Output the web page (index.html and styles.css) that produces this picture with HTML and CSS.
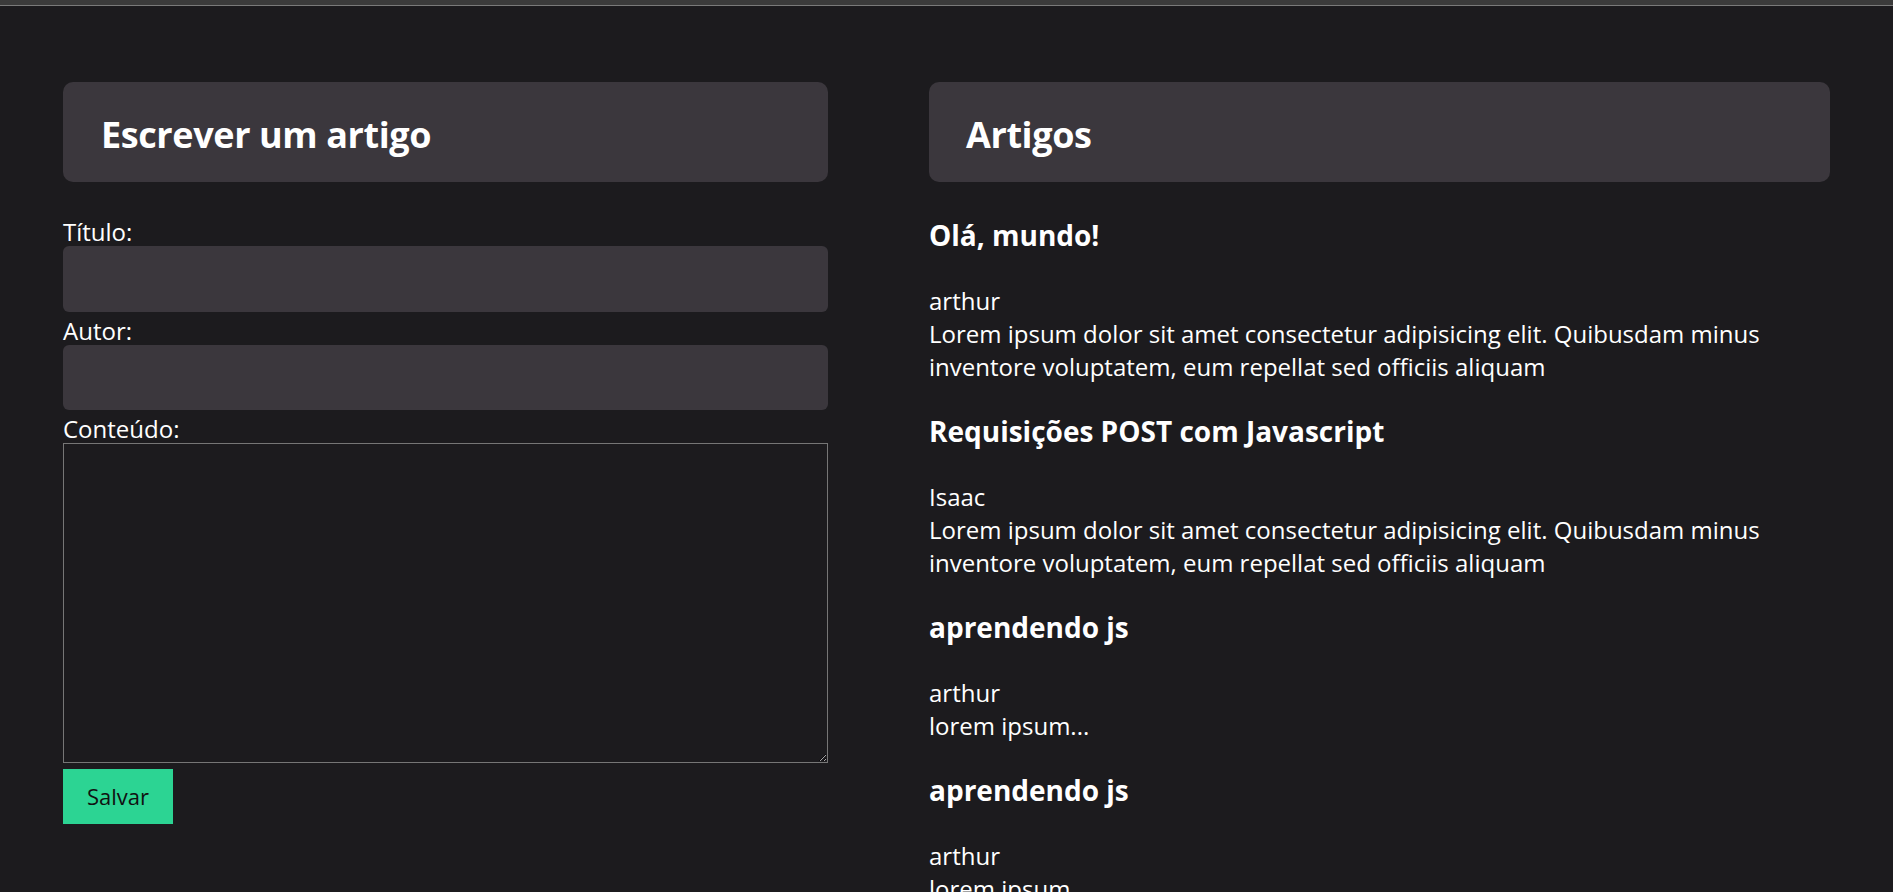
FILE: index.html
```html
<!DOCTYPE html>
<html lang="pt-BR">
<head>
<meta charset="utf-8">
<title>Artigos</title>
<link rel="stylesheet" href="styles.css">
</head>
<body>
<div class="topbar"></div>
<main class="page">
  <section class="col">
    <header class="panel-head"><h1>Escrever um artigo</h1></header>
    <form class="form">
      <label class="label" for="titulo">Título:</label>
      <input class="field" id="titulo" type="text">
      <label class="label" for="autor">Autor:</label>
      <input class="field field-b" id="autor" type="text">
      <label class="label" for="conteudo">Conteúdo:</label>
      <textarea class="area" id="conteudo"></textarea>
      <button class="btn" type="button">Salvar</button>
    </form>
  </section>
  <section class="col">
    <header class="panel-head panel-head-r"><h1>Artigos</h1></header>
    <div class="list">
      <article class="art">
        <h3>Olá, mundo!</h3>
        <div>arthur</div>
        <div>Lorem ipsum dolor sit amet consectetur adipisicing elit. Quibusdam minus inventore voluptatem, eum repellat sed officiis aliquam</div>
      </article>
      <article class="art">
        <h3>Requisições POST com Javascript</h3>
        <div>Isaac</div>
        <div>Lorem ipsum dolor sit amet consectetur adipisicing elit. Quibusdam minus inventore voluptatem, eum repellat sed officiis aliquam</div>
      </article>
      <article class="art">
        <h3>aprendendo js</h3>
        <div>arthur</div>
        <div>lorem ipsum...</div>
      </article>
      <article class="art">
        <h3>aprendendo js</h3>
        <div>arthur</div>
        <div>lorem ipsum...</div>
      </article>
    </div>
  </section>
</main>
</body>
</html>
```
FILE: styles.css
```css
html, body {
  margin: 0;
  padding: 0;
}
body {
  background: #1c1b1e;
  color: #ffffff;
  font-family: "Open Sans", "Noto Sans", sans-serif;
  font-size: 24px;
  line-height: 33px;
  overflow: hidden;
  height: 892px;
}
.topbar {
  height: 5px;
  background: #3b3b3b;
  border-bottom: 1px solid #7a7a7a;
}
.page {
  display: grid;
  grid-template-columns: 765fr 901fr;
  column-gap: 101px;
  padding: 76px 63px 0;
  align-items: start;
}
.col {
  min-width: 0;
}
.panel-head {
  height: 100px;
  box-sizing: border-box;
  background: #3b373d;
  border-radius: 10px;
  padding: 5px 0 0 38px;
  display: flex;
  align-items: center;
}
.panel-head-r {
  padding-left: 37px;
}
.panel-head h1 {
  margin: 0;
  font-size: 36px;
  line-height: 50px;
  font-weight: 700;
  letter-spacing: -0.4px;
}
.form {
  display: flex;
  flex-direction: column;
  align-items: flex-start;
  padding-top: 31px;
}
.label {
  display: block;
  height: 33px;
  box-sizing: border-box;
  padding-top: 4px;
  line-height: 29px;
}
.field {
  display: block;
  width: 100%;
  height: 66px;
  box-sizing: border-box;
  border: none;
  border-radius: 6px;
  background: #3b373d;
  color: #fff;
  font: inherit;
  margin: 0;
}
.field-b {
  height: 65px;
}
.area {
  display: block;
  width: 100%;
  height: 320px;
  box-sizing: border-box;
  background: #1c1b1e;
  border: 1px solid #767676;
  color: #fff;
  margin: 0;
  font: inherit;
}
.btn {
  margin-top: 6px;
  width: 110px;
  height: 55px;
  border: none;
  border-radius: 0;
  background: #2cd493;
  color: #111;
  font-family: inherit;
  font-size: 22px;
  padding: 0 0 2px;
}
.list {
  padding-top: 5px;
}
.art h3 {
  margin: 29px 0;
  font-size: 28px;
  line-height: 39px;
  font-weight: 700;
}
.art div + div {
  margin-top: 0;
}
```
